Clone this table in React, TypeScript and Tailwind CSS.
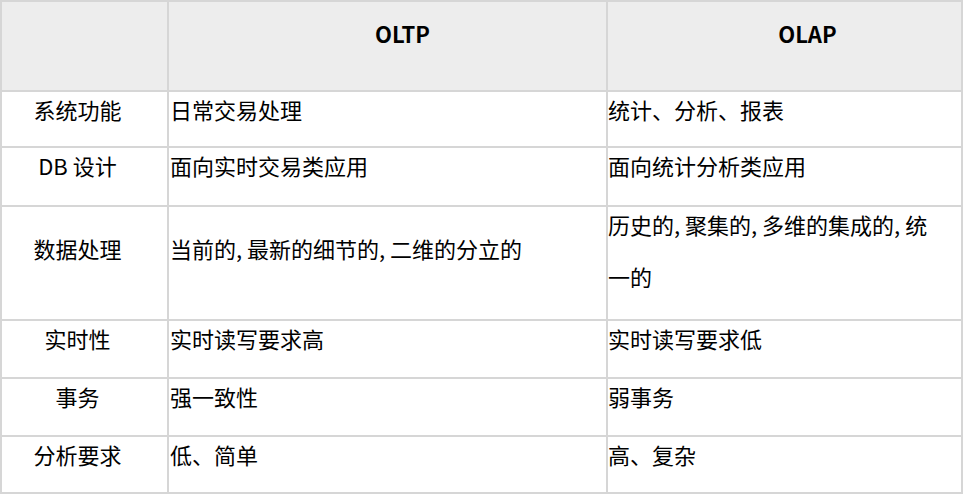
const rows: { k: string; a: string; b: string; h: string; tall?: boolean }[] = [
  { k: "系统功能", a: "日常交易处理", b: "统计、分析、报表", h: "h-[54px]" },
  { k: "DB 设计", a: "面向实时交易类应用", b: "面向统计分析类应用", h: "h-[57px]" },
  {
    k: "数据处理",
    a: "当前的, 最新的细节的, 二维的分立的",
    b: "历史的, 聚集的, 多维的集成的, 统一的",
    h: "h-[112px]",
    tall: true,
  },
  { k: "实时性", a: "实时读写要求高", b: "实时读写要求低", h: "h-[56px]" },
  { k: "事务", a: "强一致性", b: "弱事务", h: "h-[56px]" },
  { k: "分析要求", a: "低、简单", b: "高、复杂", h: "h-[55px]" },
]

export default function App() {
  return (
    <div
      className="w-[969px] h-[494px] bg-white text-black overflow-hidden"
      style={{ fontFamily: '"Noto Sans CJK SC", "Noto Sans", sans-serif' }}
    >
      <div className="w-[963px] grid grid-cols-[165px_437px_353px] gap-[2px] p-[2px] bg-[#d6d6d6]">
        {/* header */}
        <div className="h-[88px] bg-[#ededed]" />
        <div className="h-[88px] bg-[#ededed] text-center pl-[30px] pt-[14px] text-[22px] font-bold leading-[34px]">
          OLTP
        </div>
        <div className="h-[88px] bg-[#ededed] text-center pl-[46px] pt-[14px] text-[22px] font-bold leading-[34px]">
          OLAP
        </div>

        {rows.map((r) => (
          <div key={r.k} className="contents">
            <div className={`${r.h} bg-white text-center pr-[14px] text-[22px] overflow-hidden`}>
              <div className={`leading-[52px] -mt-[9px] ${r.tall ? "pt-[24px]" : ""}`}>{r.k}</div>
            </div>
            <div className={`${r.h} bg-white pl-[1px] text-[22px] overflow-hidden`}>
              <div className={`leading-[52px] -mt-[9px] ${r.tall ? "pt-[24px]" : ""}`}>{r.a}</div>
            </div>
            <div className={`${r.h} bg-white pr-[24px] text-[22px] overflow-hidden`}>
              <div className="leading-[52px] -mt-[9px]">{r.b}</div>
            </div>
          </div>
        ))}
      </div>
    </div>
  )
}
